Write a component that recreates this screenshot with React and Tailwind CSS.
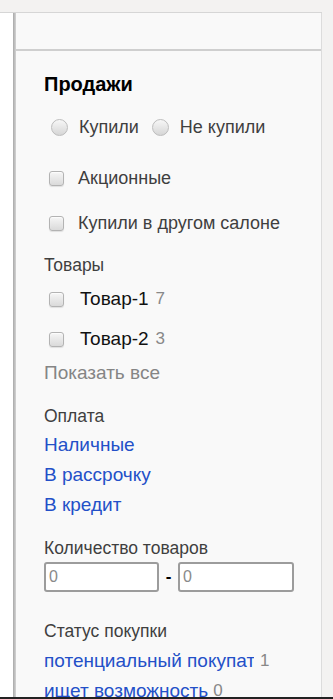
import React from "react";

const Checkbox = () => (
  <span className="inline-block w-[15px] h-[15px] rounded-[3px] border border-[#b3b3b3] bg-gradient-to-b from-[#f6f6f6] to-[#dadada] shadow-[inset_0_1px_1px_rgba(255,255,255,0.8),0_1px_1px_rgba(0,0,0,0.1)] shrink-0" />
);

const Radio = () => (
  <span className="inline-block w-[17px] h-[17px] rounded-full border border-[#bdbdbd] bg-gradient-to-b from-[#f7f7f7] to-[#d6d6d6] shrink-0" />
);

const App = () => {
  return (
    <div className="w-[333px] h-[699px] bg-[#f3f2f1] overflow-hidden flex flex-col font-['Liberation_Sans',Arial,sans-serif]">
      {/* top strip */}
      <div className="h-[12px] shrink-0" />
      <div className="h-px w-[322px] bg-[#d6d6d6] shrink-0" />

      <div className="flex flex-1 min-h-0">
        <div className="w-[13px] bg-white shrink-0" />
        <div className="w-[3px] bg-gradient-to-r from-[#a9a9a9] to-[#d4d4d4] shrink-0" />

        {/* panel */}
        <div className="w-[305px] bg-[#f9f9f9] flex flex-col shrink-0">
          <div className="h-[38px] border-b-2 border-[#cfcfcf] shrink-0" />

          <div className="pl-[28px] flex flex-col text-[#3f3f3f]">
            <div className="mt-[22px] h-[22px] leading-[22px] text-[20px] font-bold text-black">
              Продажи
            </div>

            <div className="mt-[20px] h-[24px] flex items-center pl-[7px] text-[18px]">
              <Radio />
              <span className="ml-[11px]">Купили</span>
              <span className="ml-[13px] flex items-center">
                <Radio />
              </span>
              <span className="ml-[11px]">Не купили</span>
            </div>

            <div className="mt-[27px] h-[24px] flex items-center pl-[5px] text-[18px]">
              <Checkbox />
              <span className="ml-[14px]">Акционные</span>
            </div>

            <div className="mt-[21px] h-[24px] flex items-center pl-[5px] text-[18px]">
              <Checkbox />
              <span className="ml-[14px]">Купили в другом салоне</span>
            </div>

            <div className="mt-[20px] h-[20px] leading-[20px] text-[17.5px]">Товары</div>

            <div className="mt-[12px] h-[24px] flex items-center pl-[5px]">
              <Checkbox />
              <span className="ml-[16px] text-[19px] text-[#111]">Товар-1</span>
              <span className="ml-[7px] text-[17px] text-[#888]">7</span>
            </div>

            <div className="mt-[16px] h-[24px] flex items-center pl-[5px]">
              <Checkbox />
              <span className="ml-[16px] text-[19px] text-[#111]">Товар-2</span>
              <span className="ml-[7px] text-[17px] text-[#888]">3</span>
            </div>

            <div className="mt-[10px] h-[24px] leading-[24px] text-[19px] text-[#858585]">
              Показать все
            </div>

            <div className="mt-[21px] h-[20px] leading-[20px] text-[17.5px]">Оплата</div>

            <div className="mt-[4px] flex flex-col text-[19px] text-[#2350c8]">
              <a className="h-[30px] leading-[30px]">Наличные</a>
              <a className="h-[30px] leading-[30px]">В рассрочку</a>
              <a className="h-[30px] leading-[30px]">В кредит</a>
            </div>

            <div className="mt-[18px] h-[20px] leading-[20px] text-[17.5px]">Количество товаров</div>

            <div className="mt-[4px] h-[30px] flex items-center">
              <div className="w-[115px] h-[30px] bg-white border-2 border-[#9c9c9c] rounded-[3px] flex items-center pl-[3px] text-[16px] text-[#8a8a8a]">
                0
              </div>
              <span className="w-[19px] text-center text-[17px] font-bold text-black">-</span>
              <div className="w-[116px] h-[30px] bg-white border-2 border-[#9c9c9c] rounded-[3px] flex items-center pl-[3px] text-[16px] text-[#8a8a8a]">
                0
              </div>
            </div>

            <div className="mt-[29px] h-[20px] leading-[20px] text-[17.5px]">Статус покупки</div>

            <div className="mt-[5px] h-[30px] flex items-center">
              <a className="inline-block max-w-[210px] overflow-hidden whitespace-nowrap text-[19px] text-[#2350c8]">
                потенциальный покупатель
              </a>
              <span className="ml-[6px] text-[17px] text-[#888]">1</span>
            </div>

            <div className="h-[30px] flex items-center">
              <a className="text-[19px] text-[#2350c8]">ищет возможность</a>
              <span className="ml-[5px] text-[17px] text-[#888]">0</span>
            </div>
          </div>
        </div>

        <div className="w-px bg-[#dcdcdc] shrink-0" />
      </div>

      {/* bottom edge */}
      <div className="h-[2px] bg-[#222] shrink-0" />
    </div>
  );
};

export default App;
